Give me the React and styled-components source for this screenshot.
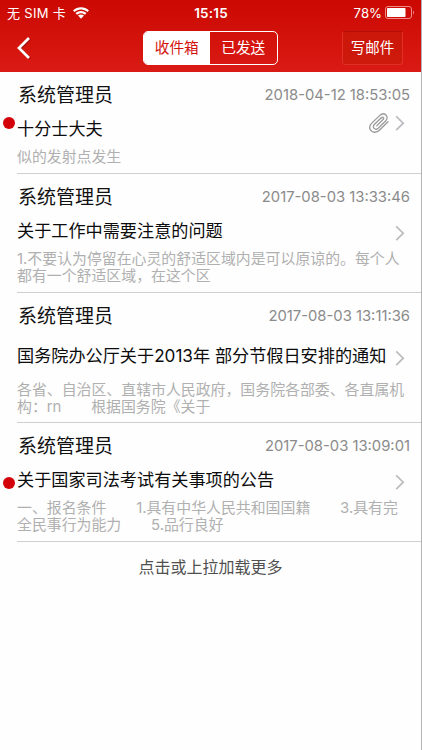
import styled, { createGlobalStyle } from 'styled-components'

const GlobalStyle = createGlobalStyle`
    * {
        box-sizing: border-box;
    }
    body {
        margin: 0;
        background-color: #fefefe;
        font-family: Inter, "Noto Sans CJK SC", sans-serif;
    }
`

const Screen = styled.div`
    height: 750px;
    overflow: hidden;
    background-color: #fefefe;
    border-right: 1px solid #b4b4b4;
`

const Header = styled.header`
    height: 72px;
    margin-right: -1px;
    color: #ffffff;
    background: linear-gradient(#cb0902, #da1a14);
`

const StatusBar = styled.div`
    height: 24px;
    display: grid;
    grid-template-columns: 1fr auto 1fr;
    align-items: center;
    padding: 1px 7px 0 7px;
`

const Carrier = styled.div`
    display: flex;
    align-items: center;
    gap: 7px;
    font-size: 13px;
    line-height: 20px;
    letter-spacing: 0.3px;
    white-space: pre;
`

const Clock = styled.div`
    font-size: 13.5px;
    font-weight: 600;
    line-height: 20px;
    letter-spacing: 0.2px;
`

const Battery = styled.div`
    display: flex;
    align-items: center;
    justify-content: flex-end;
    gap: 3px;
    font-size: 13.2px;
    line-height: 20px;
`

const NavBar = styled.div`
    height: 48px;
    display: grid;
    grid-template-columns: 1fr auto 1fr;
    align-items: center;
    padding: 0 19px 1px 17px;
`

const BackButton = styled.button`
    width: 14px;
    height: 24px;
    padding: 0;
    border: 0;
    background: none;
    display: flex;
    cursor: pointer;
`

const Segments = styled.div`
    width: 135px;
    height: 34px;
    display: flex;
    border: 1px solid #ffffff;
    border-radius: 5px;
    overflow: hidden;
`

const Segment = styled.button`
    flex: 1;
    padding: 1px 0 0;
    border: 0;
    font-family: inherit;
    font-size: 14.7px;
    line-height: 30px;
    color: ${props=>props.$active ? "#d5120c" : "#ffffff" };
    background-color: ${props=>props.$active ? "#ffffff" : "transparent" };
    cursor: pointer;
`

const ComposeButton = styled.button`
    justify-self: end;
    width: 61px;
    height: 34px;
    padding: 1px 0 0;
    border: 1px solid #df302a;
    border-top-color: #b00e08;
    border-radius: 3px;
    font-family: inherit;
    font-size: 14.5px;
    line-height: 30px;
    color: #ffffff;
    background: linear-gradient(#ca170b, #ce1a0b);
    cursor: pointer;
`

const List = styled.div`
    display: flex;
    flex-direction: column;
`

const Row = styled.article`
    position: relative;
    height: ${props=>props.$height}px;
    padding-left: 17px;
`

const RowBody = styled.div`
    height: 100%;
    padding: 10px 11px 0 0;
    border-bottom: 1px solid #cfcfcf;
`

const RowTop = styled.div`
    height: 28px;
    display: flex;
    align-items: center;
    justify-content: space-between;
`

const Sender = styled.div`
    font-size: 19px;
    line-height: 28px;
    color: #111111;
    padding-left: 1px;
`

const Time = styled.time`
    font-size: 14.8px;
    line-height: 26px;
    padding-bottom: 2px;
    color: #8b8b8b;
`

const Subject = styled.div`
    height: ${props=>props.$height}px;
    font-size: 17.15px;
    line-height: ${props=>props.$height - 1}px;
    color: #0c0c0c;
    white-space: pre;
`

const Preview = styled.div`
    padding-top: 1px;
    font-size: 14.9px;
    line-height: 17px;
    color: #b0b0b0;
    white-space: pre;
`

const UnreadDot = styled.span`
    position: absolute;
    left: 3px;
    top: 50%;
    width: 12px;
    height: 12px;
    margin-top: -6px;
    border-radius: 50%;
    background-color: #d30208;
`

const RowIcons = styled.div`
    position: absolute;
    right: 16px;
    top: 0;
    bottom: 1px;
    display: flex;
    align-items: center;
    gap: 6px;
`

const LoadMore = styled.div`
    height: 50px;
    text-align: center;
    font-size: 16px;
    line-height: 50px;
    color: #505050;
`

const WifiIcon = () => (
  <svg width="16" height="12" viewBox="0 0 16 12" fill="#fff">
    <path d="M0 3.5C4.5-.9 11.5-.9 16 3.5L14.5 5.1C10.8 1.6 5.2 1.6 1.5 5.1Z" />
    <path d="M2.5 6.1C5.6 3.2 10.4 3.2 13.5 6.1L12 7.7C9.7 5.6 6.3 5.6 4 7.7Z" />
    <path d="M5 8.6C6.7 7.1 9.3 7.1 11 8.6L8 11.7Z" />
  </svg>
)

const BatteryIcon = () => (
  <svg width="30" height="13" viewBox="0 0 30 13">
    <rect x="0.5" y="0.5" width="26" height="12" rx="2.5" fill="none" stroke="#f08a86" />
    <rect x="2" y="2" width="18.5" height="9" rx="0.8" fill="#fff" />
    <path d="M28 4.5v4c1.300-.5 1.300-3.500 0-4Z" fill="#f08a86" />
  </svg>
)

const BackIcon = () => (
  <svg width="14" height="24" viewBox="0 0 14 24" fill="none" strokeWidth="2.7">
    <path d="M13 2.8 3 12.7l10 9.9" stroke="#a30d08" />
    <path d="M12 2 2 12l10 10" stroke="#fff" />
  </svg>
)

const ChevronIcon = () => (
  <svg width="10" height="16" viewBox="0 0 10 16" fill="none" stroke="#bdbdc1" strokeWidth="1.8">
    <path d="M1.2 1.3 8.2 8.2l-7 6.900" />
  </svg>
)

const ClipIcon = () => (
  <svg width="20" height="20" viewBox="0 0 20 20" fill="none" stroke="#999" strokeWidth="1.3" strokeLinecap="round">
    <path d="M19 8.8 10.4 17.3C7.5 20.2 3.4 19.6 1.8 17.3C.2 15 .6 12.3 2.5 10.4L10.6 2.6C12.6.7 15.2.3 16.9 2C18.6 3.7 18.4 6.2 16.6 8L9.2 15.2C7.9 16.4 6.2 16.5 5.1 15.4C4 14.3 4.1 12.7 5.3 11.5L12.3 4.7" />
    <path d="M12.3 4.7c1.500-1.300 3.200.2 2 1.600L7.7 12.9" />
  </svg>
)

const mails = [
  {
    sender: "系统管理员",
    time: "2018-04-12 18:53:05",
    subject: "十分士大夫",
    preview: "似的发射点发生",
    height: 102,
    subjectHeight: 38,
    unread: true,
    attachment: true,
  },
  {
    sender: "系统管理员",
    time: "2017-08-03 13:33:46",
    subject: "关于工作中需要注意的问题",
    preview: "1.不要认为停留在心灵的舒适区域内是可以原谅的。每个人\n都有一个舒适区域，在这个区",
    height: 119,
    subjectHeight: 38,
  },
  {
    sender: "系统管理员",
    time: "2017-08-03 13:11:36",
    subject: "国务院办公厅关于2013年 部分节假日安排的通知",
    preview: "各省、自治区、直辖市人民政府，国务院各部委、各直属机\n构：rn　　根据国务院《关于",
    height: 130,
    subjectHeight: 50,
  },
  {
    sender: "系统管理员",
    time: "2017-08-03 13:09:01",
    subject: "关于国家司法考试有关事项的公告",
    preview: "一、报名条件　　1.具有中华人民共和国国籍　　3.具有完\n全民事行为能力　　5.品行良好",
    height: 119,
    subjectHeight: 38,
    unread: true,
  },
]

const MailRow = ({ mail }) => {
  return (
    <Row $height={mail.height}>
        <RowBody>
            <RowTop>
                <Sender>{mail.sender}</Sender>
                <Time>{mail.time}</Time>
            </RowTop>
            <Subject $height={mail.subjectHeight}>{mail.subject}</Subject>
            <Preview>{mail.preview}</Preview>
        </RowBody>
        {mail.unread && <UnreadDot/>}
        <RowIcons>
            {mail.attachment && <ClipIcon/>}
            <ChevronIcon/>
        </RowIcons>
    </Row>
  )
}

const App = () => {
  return (
    <Screen>
        <GlobalStyle/>
        <Header>
            <StatusBar>
                <Carrier>无 SIM 卡<WifiIcon/></Carrier>
                <Clock>15:15</Clock>
                <Battery>78%<BatteryIcon/></Battery>
            </StatusBar>
            <NavBar>
                <BackButton aria-label="返回"><BackIcon/></BackButton>
                <Segments>
                    <Segment $active>收件箱</Segment>
                    <Segment>已发送</Segment>
                </Segments>
                <ComposeButton>写邮件</ComposeButton>
            </NavBar>
        </Header>
        <List>
            {mails.map((mail) => (
                <MailRow key={mail.time} mail={mail}/>
            ))}
        </List>
        <LoadMore>点击或上拉加载更多</LoadMore>
    </Screen>
  )
}

export default App
